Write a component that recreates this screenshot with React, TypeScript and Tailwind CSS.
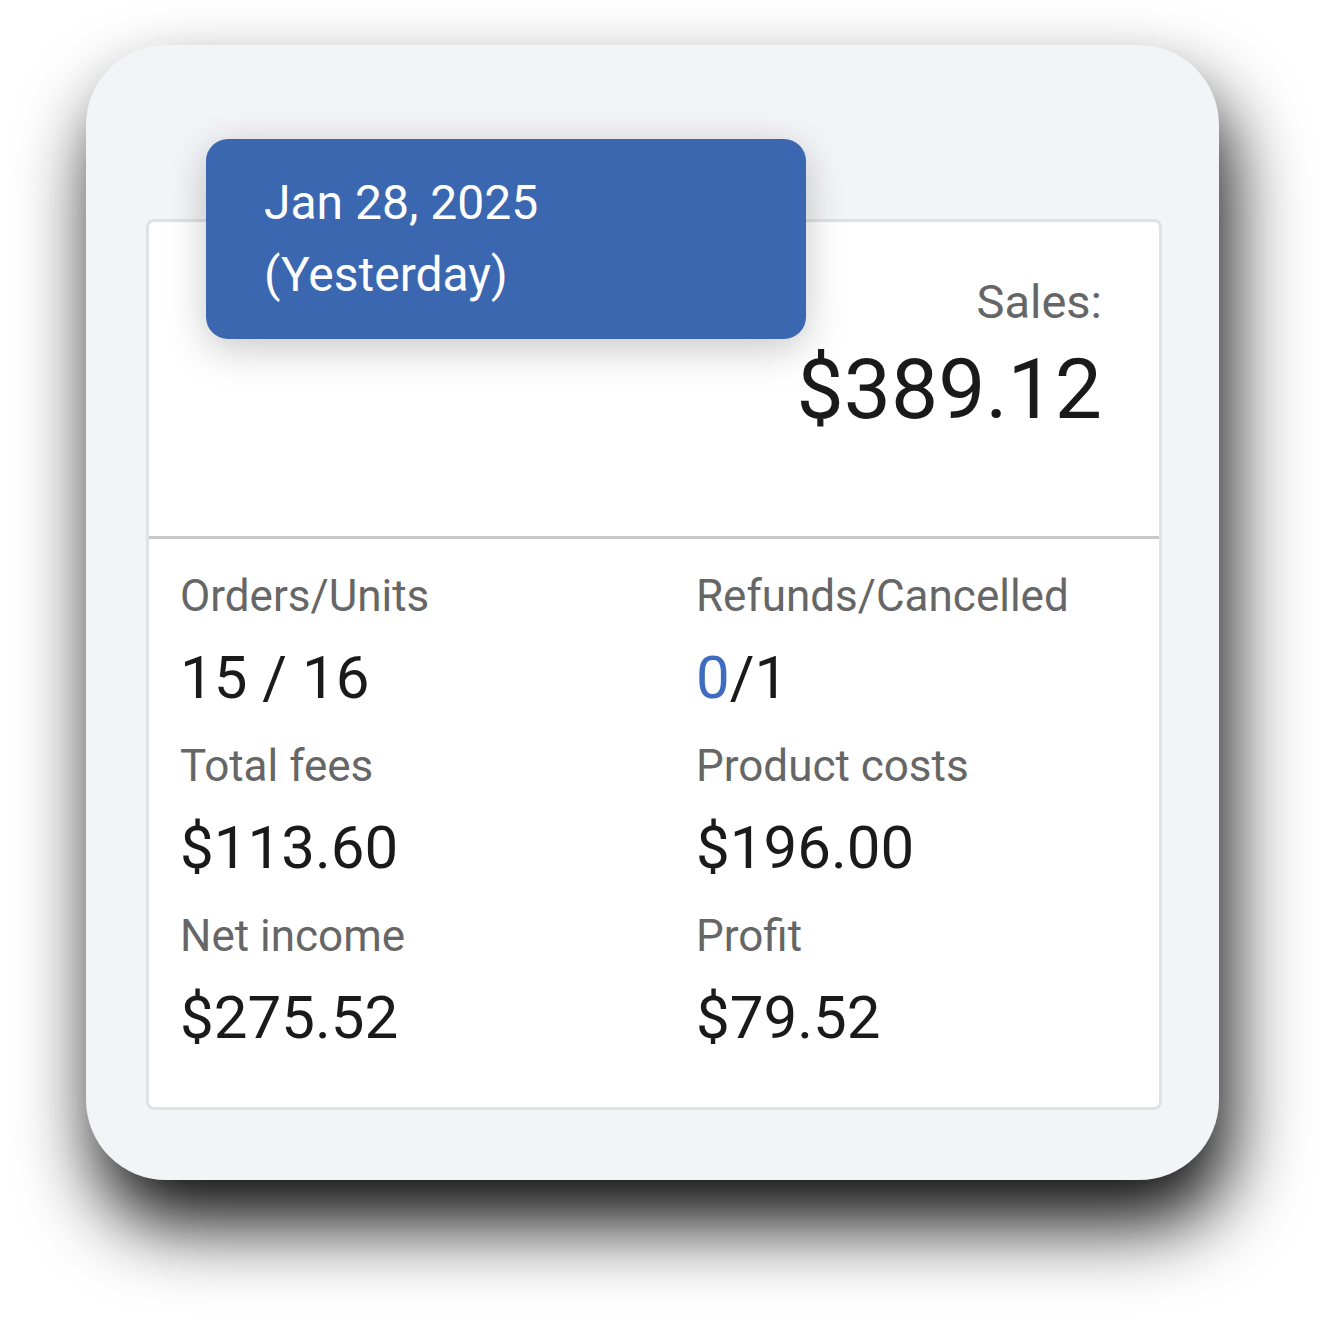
import React from "react";

const Label = ({ children }: { children: React.ReactNode }) => (
  <div className="text-[44px] leading-[60px] text-[#666666] whitespace-nowrap">{children}</div>
);

const Value = ({ children }: { children: React.ReactNode }) => (
  <div className="mt-[12px] text-[60px] leading-[80px] text-[#1a1a1a] whitespace-nowrap">{children}</div>
);

export default function App() {
  return (
    <div
      className="min-h-[1340px] w-full bg-white pt-[45px] pl-[86px]"
      style={{ fontFamily: "Roboto, 'Noto Sans', sans-serif" }}
    >
      <div className="w-[1133px] h-[1135px] rounded-[80px] bg-[#f3f4f7] pl-[60px] pr-[57px] pt-[174px] pb-[70px] shadow-[10px_44px_76px_rgba(0,0,0,0.95)]">
        <div className="relative h-full rounded-[8px] border-[3px] border-[#e0e1e2] bg-white">
          {/* Tooltip */}
          <div className="absolute left-[57px] top-[-83px] w-[600px] h-[200px] rounded-[22px] bg-[#3b67b1] pl-[58px] pt-[28px] text-white text-[48px] leading-[72px] shadow-[0_10px_40px_rgba(0,0,0,0.22)]">
            <div>Jan 28, 2025</div>
            <div>(Yesterday)</div>
          </div>

          {/* Top section */}
          <div className="h-[314px] pt-[50px] pr-[57px] flex flex-col items-end">
            <div className="text-[47px] leading-[60px] text-[#666666]">Sales:</div>
            <div className="mt-[8px] text-[84px] leading-[100px] text-[#1a1a1a]">$389.12</div>
          </div>

          <div className="h-[3px] bg-[#c8c8c8]" />

          {/* Bottom section */}
          <div className="grid grid-cols-2 gap-x-[80px] gap-y-[18px] pl-[31px] pr-[27px] pt-[27px] pb-[49px]">
            <div>
              <Label>Orders/Units</Label>
              <Value>15 / 16</Value>
            </div>
            <div>
              <Label>Refunds/Cancelled</Label>
              <Value>
                <span className="text-[#3d6cc0]">0</span>/1
              </Value>
            </div>
            <div>
              <Label>Total fees</Label>
              <Value>$113.60</Value>
            </div>
            <div>
              <Label>Product costs</Label>
              <Value>$196.00</Value>
            </div>
            <div>
              <Label>Net income</Label>
              <Value>$275.52</Value>
            </div>
            <div>
              <Label>Profit</Label>
              <Value>$79.52</Value>
            </div>
          </div>
        </div>
      </div>
    </div>
  );
}
